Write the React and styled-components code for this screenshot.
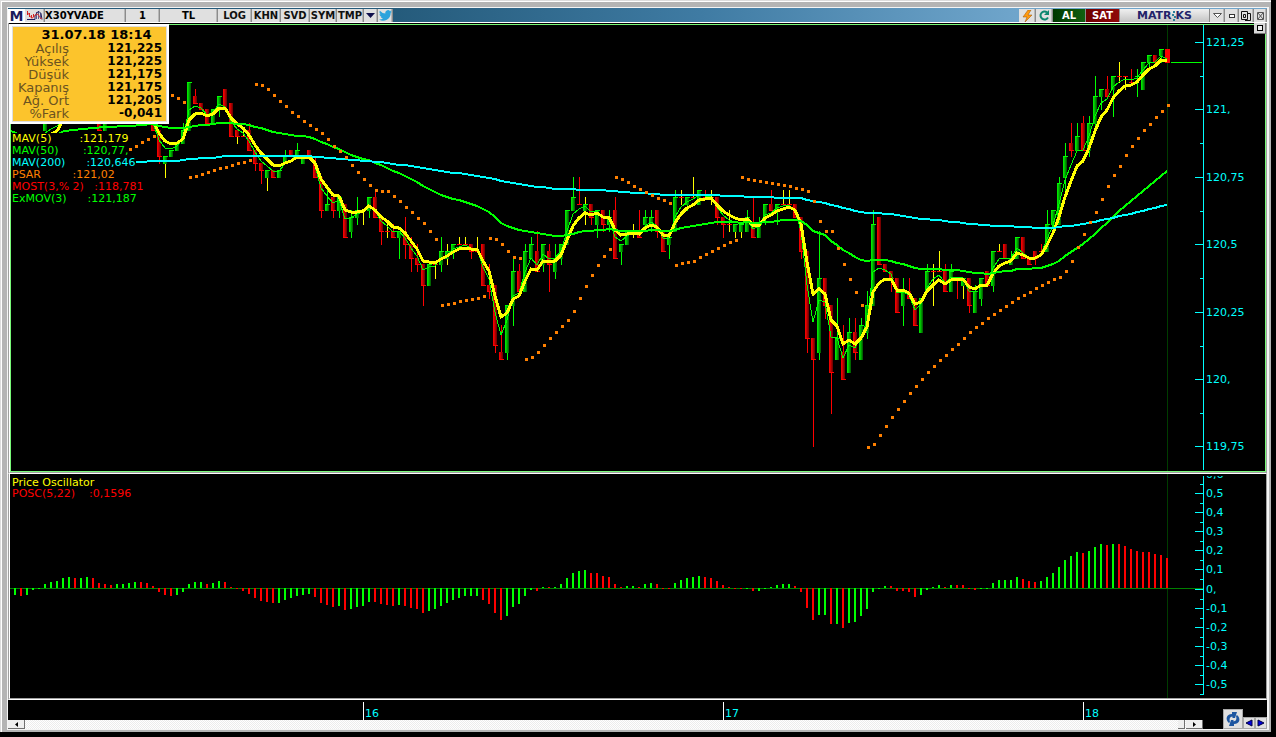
import React from "react";
import styled, { createGlobalStyle } from "styled-components";

// ------------------------ STYLES ------------------------

const GlobalStyle = createGlobalStyle`
  * {
    box-sizing: border-box;
  }

  body {
    margin: 0;
    background: #000;
    font-family: "DejaVu Sans", Verdana, sans-serif;
    font-size: 11px;
  }

  button,
  input {
    font: inherit;
    margin: 0;
    padding: 0;
    border: 0;
    border-radius: 0;
  }
`;

const Desktop = styled.div`
  height: 100vh;
  padding: 0 5px 5px 0;
`;

const Window = styled.main`
  height: 100%;
  padding: 7px 2px 2px 7px;
  background: #b4b4b4;
  box-shadow: inset 1px 1px #dcdcdc, inset 2px 2px #fff;
`;

const Frame = styled.div`
  height: 100%;
  display: flex;
  flex-direction: column;
  border: 1px solid #f4f4f4;
  border-right-width: 2px;
`;

const Toolbar = styled.header`
  height: 15px;
  flex: none;
  display: flex;
  padding-top: 1px;
  border-bottom: 1px solid #fff;
  background: linear-gradient(90deg, #245a7a 30%, #3f7ba3 55%, #6fa5cb 80%);
`;

const ToolField = styled.input`
  width: ${(p) => p.$width}px;
  background: #e0e0e0;
  border: solid #8c8c8c;
  border-width: 0 1px 0 0;
  box-shadow: inset -1px 0 #b8b8b8;
  color: #000;
  font-size: 10px;
  font-weight: 700;
  text-align: ${(p) => p.$align || "center"};
`;

const ToolButton = styled.button`
  width: ${(p) => p.$width}px;
  display: flex;
  align-items: center;
  justify-content: center;
  background: ${(p) => p.$bg || "#e0e0e0"};
  border: solid #8c8c8c;
  border-width: 0 1px 0 0;
  box-shadow: inset -1px 0 ${(p) => (p.$bg ? "transparent" : "#b8b8b8")};
  color: ${(p) => p.$color || "#101010"};
  font-size: 10px;
  font-weight: 700;
  line-height: 12px;
`;

const Spacer = styled.div`
  flex: 1;
`;

const AppMark = styled.div`
  width: 17px;
  background: #fff;
  color: #1c1c5e;
  font-size: 14px;
  font-weight: 700;
  line-height: 14px;
  text-align: center;
`;

const Brand = styled.div`
  width: 90px;
  display: flex;
  align-items: center;
  justify-content: center;
  background: linear-gradient(#f0f0f0, #c4c4c4);
  border-right: 1px solid #8c8c8c;
  color: #23236a;
  font-size: 11px;
  font-weight: 700;
  line-height: 12px;
`;

const PricePanel = styled.section`
  position: relative;
  flex: 451 1 0;
  min-height: 0;
  padding-top: 1px;
  background: #000;
  border: solid #a0a0a0;
  border-width: 0 1px;
  border-bottom: 1px solid #fff;
`;

const PanelEdge = styled.div`
  height: 100%;
  border-left: 1px solid #fff;
  border-bottom: 1px solid #a0a0a0;
`;

const OscPanel = styled(PricePanel)`
  flex-grow: 226;
  padding-top: 0;
`;

const Chart = styled.svg`
  display: block;
  width: 100%;
  height: 100%;
  border: ${(p) => (p.$framed ? "1px solid #78f878" : "0")};
  font-size: 11px;
`;

const MaxButton = styled.button`
  position: absolute;
  top: 0;
  right: 0;
  width: 12px;
  height: 11px;
  display: flex;
  align-items: center;
  justify-content: center;
  background: #d8d8d8;
  border-right: 1px solid #777;
  border-bottom: 1px solid #777;
`;

const QuoteBox = styled.section`
  position: absolute;
  top: 1px;
  left: 1px;
  width: 159px;
  height: 100px;
  padding: 2px 5px;
  background: #fcc42c;
  border: 2px solid #fff;
  box-shadow: inset 1px 1px #dedede, inset -1px -1px #dedede;
`;

const QuoteTime = styled.h2`
  margin: 0;
  padding-left: 14px;
  font-size: 13px;
  font-weight: 700;
  line-height: 14px;
  text-align: center;
`;

const QuoteTable = styled.table`
  width: 100%;
  border-collapse: collapse;
  line-height: 13px;

  th {
    width: 52px;
    padding: 0;
    color: #6b5320;
    font-size: 13px;
    font-weight: 400;
    text-align: right;
  }

  td {
    padding: 0;
    color: #000;
    font-size: 12px;
    font-weight: 700;
    text-align: right;
  }
`;

const Legend = styled.ul`
  position: absolute;
  top: ${(p) => p.$top}px;
  left: 3px;
  margin: 0;
  padding: 0;
  list-style: none;
`;

const LegendRow = styled.li`
  width: fit-content;
  height: ${(p) => p.$height || 12}px;
  background: #000;
  color: ${(p) => p.$color};
  line-height: 12px;
  white-space: pre;
`;

const Footer = styled.footer`
  height: 29px;
  flex: none;
  display: flex;
  background: #000;
`;

const Timeline = styled.div`
  flex: 1;
  display: flex;
  flex-direction: column;
`;

const TimeAxis = styled.svg`
  display: block;
  width: 100%;
  height: 20px;
  font-size: 11px;
`;

const Scrollbar = styled.div`
  height: 9px;
  display: flex;
  gap: 1px;
  background: repeating-conic-gradient(#fff 0 25%, #ececec 0 50%) 0 0 / 2px 2px;
`;

const ScrollButton = styled.button`
  width: ${(p) => p.$width}px;
  display: flex;
  align-items: center;
  justify-content: center;
  background: #efefef;
  border-right: 1px solid #707070;
  border-bottom: 1px solid #707070;
`;

const Corner = styled.div`
  width: 64px;
  display: flex;
  align-items: flex-end;
  justify-content: flex-end;
`;

const CornerButton = styled.button`
  width: ${(p) => p.$width}px;
  height: ${(p) => p.$height}px;
  display: flex;
  align-items: center;
  justify-content: center;
  background: #e0e0e0;
  border: 1px solid #a8a8a8;
`;

// ------------------------ DATA ------------------------

// levels count 0.025 steps down from 121,25: [kind, high, top, bottom, low]
// g = up, r = down, d = doji, a trailing y paints the wick yellow
const FIRST = 23;
const candles = `
r 12 12 13 13|r 13 13 17 18|gy 17 17 18 20|g 16 16 17 17|g 15 15 16 16|g 12 13 15 15|g 6 6 13 13
r 7 8 9 9|r 9 9 10 10|r 10 10 12 12|g 10 10 12 12|g 8 8 10 11|r 7 7 10 10|r 9 9 14 14
ry 13 13 14 15|d 13 14 14 14|r 12 13 16 16|r 16 16 18 19|r 18 18 19 21|gy 19 19 20 22|r 19 19 20 20
g 19 19 20 20|g 16 17 18 18|r 16 16 17 17|g 15 16 17 17|g 17 17 18 18|r 16 16 17 17|r 17 18 20 20
r 20 20 25 26|g 22 24 25 25|r 23 23 25 26|g 23 23 25 26|r 24 24 29 29|g 25 26 28 29|g 23 25 26 27
d 25 25 25 27|g 23 23 25 26|r 22 23 26 26|r 26 26 28 30|d 27 28 28 29|r 27 28 29 29|g 28 28 29 32
r 26 28 30 32|r 29 30 32 34|r 30 32 33 34|r 33 33 36 39|g 33 33 36 36|d 33 33 33 35|g 29 31 33 34
gy 30 31 32 33|g 30 30 31 32|d 29 30 30 30|d 29 30 30 30|r 30 30 31 32|d 29 31 31 31|r 30 30 36 36
r 33 36 37 38|r 36 36 45 46|r 42 46 47 47|g 39 39 46 47|g 32 34 39 42|r 33 34 37 37|g 30 31 37 37
g 29 30 32 32|r 28 31 34 34|g 30 30 33 34|r 30 31 33 37|g 30 32 34 35|g 30 30 32 33|g 25 25 30 30
g 20 23 25 25|r 20 24 24 24|gy 23 24 25 27|r 24 24 26 27|g 25 25 27 29|r 25 25 27 28|g 25 26 27 28
r 23 25 32 32|g 30 30 31 33|g 28 28 30 30|d 27 28 28 29|r 25 28 29 29|g 25 26 27 28|g 25 26 27 28
r 25 25 28 29|r 28 28 31 31|g 29 29 30 32|g 22 23 28 28|d 22 23 23 24|g 23 23 24 25|d 20 23 23 23
g 22 22 24 24|r 22 23 23 23|d 22 23 23 24|r 23 23 26 27|r 26 26 27 29|d 25 27 27 28|gy 27 27 28 29
gy 27 27 28 29|g 25 26 28 28|r 23 27 29 29|g 26 27 29 29|g 24 24 26 27|r 22 24 25 25|g 24 24 25 27
d 22 24 24 24|d 22 24 24 24|r 24 24 26 26|r 26 26 31 32|r 31 31 44 46|r 44 44 47 60|g 28 35 46 47
r 35 35 39 41|r 39 39 49 55|g 38 44 47 47|r 42 46 50 50|g 41 43 49 49|r 41 43 46 47|g 41 42 47 47
g 37 39 43 44|g 25 27 39 39|r 26 26 33 33|r 33 33 34 34|r 34 34 35 37|r 35 35 40 40|g 35 37 39 42
r 35 37 38 38|r 38 38 42 42|g 38 38 43 43|g 33 34 37 37|d 33 34 34 39|d 31 34 34 34|r 33 34 37 37
g 33 34 37 37|r 35 35 35 38|gy 35 35 36 38|r 35 35 39 40|g 36 37 40 40|g 35 35 38 39|r 34 34 36 36
g 31 31 36 37|d 30 31 31 31|r 30 30 32 32|g 31 32 33 33|g 29 29 32 32|r 29 29 32 32|r 32 32 33 33
r 31 31 32 33|r 30 31 31 31|g 25 27 31 31|g 25 25 27 28|g 20 21 27 27|g 15 17 20 22|r 12 15 16 17
g 12 14 16 16|r 11 12 16 16|g 11 12 16 17|g 5 8 12 13|g 7 7 8 10|r 5 7 8 8|g 5 5 7 11
d 3 5 5 6|d 5 5 5 7|r 4 6 6 6|g 4 5 5 8|g 3 3 7 7|g 2 2 3 4|r 2 2 3 3|g 1 1 2 3|r 1 1 3 3`
  .trim()
  .split(/[|\n]/)
  .map((row, k) => {
    const [kind, high, top, bottom, low] = row.split(" ");
    return { i: FIRST + k, kind, high: +high, top: +top, bottom: +bottom, low: +low };
  });

const earlyCandles = [
  { i: 5, kind: "g", high: 10, top: 10, bottom: 13, low: 13 },
  { i: 14, kind: "r", high: 10, top: 10, bottom: 13, low: 13 },
  { i: 15, kind: "g", high: 10, top: 10, bottom: 13, low: 13 },
];

// parabolic stops: first bar, then one row per bar
const psar = [
  [18, 153, 149, 146, 142, 139, 136],
  [26, 95, 98, 102],
  [29, 177, 176, 174, 172, 170, 168, 167, 165, 163, 162, 160],
  [40, 84, 85, 89, 95, 101, 106, 112, 116, 121, 125, 129, 133, 139, 146, 151, 157, 165, 172, 179, 185, 190, 191, 191, 196, 201, 207, 212, 218, 223, 231, 239],
  [71, 305, 304, 303, 301, 300, 299, 298, 296],
  [79, 238, 239, 244, 251, 257, 258],
  [85, 359, 357, 352, 345, 338, 332, 326, 320, 311, 298, 286, 275, 265, 256, 249],
  [100, 177, 179, 182, 186, 189, 192, 195, 198, 200, 203],
  [110, 265, 263, 262, 261, 257, 254, 251, 248, 245, 242, 240],
  [121, 177, 179, 180, 181, 182, 183, 184, 185, 186, 188, 189, 191, 201, 221, 231, 231, 248, 264, 279, 292, 305],
  [142, 447, 444, 435, 426, 417, 409, 401, 393, 386, 379, 372, 366, 360, 355, 349, 344, 338, 332, 327, 323, 318, 314, 310, 306, 302, 298, 295, 292, 288, 285, 282, 279, 277, 271, 261, 247, 234, 222, 212, 199, 186, 175, 166, 155, 146, 138, 130, 124, 117, 111, 105],
];

const earlyOsc = [
  -0.035, -0.04, -0.035, -0.01, -0.005, 0.025, 0.035, 0.04, 0.055, 0.06, 0.055, 0.056,
  0.06, 0.055, 0.03, 0.025, 0.02, 0.025, 0.026, 0.03, 0.035, 0.034, 0.03,
];

const legend = [
  { color: "#ffff00", text: "MAV(5)        :121,179" },
  { color: "#00ff00", text: "MAV(50)       :120,77," },
  { color: "#00ffff", text: "MAV(200)      :120,646" },
  { color: "#ff8000", text: "PSAR         :121,02" },
  { color: "#ff0000", text: "MOST(3,% 2)   :118,781" },
  { color: "#00ff00", text: "ExMOV(3)      :121,187" },
];

const quote = [
  ["Açılış", "121,225"],
  ["Yüksek", "121,225"],
  ["Düşük", "121,175"],
  ["Kapanış", "121,175"],
  ["Ağ. Ort", "121,205"],
  ["%Fark", "-0,041"],
];

const priceLabels = ["121,25", "121,", "120,75", "120,5", "120,25", "120,", "119,75"];
const oscLabels = ["0,6", "0,5", "0,4", "0,3", "0,2", "0,1", "0,", "-0,1", "-0,2", "-0,3", "-0,4", "-0,5"];
const days = [
  { i: 58, label: "16" },
  { i: 118, label: "17" },
  { i: 178, label: "18" },
];

// ------------------------ SCALES ------------------------

const barX = (i) => 15 + i * 6;
const levelY = (n) => 41.9 + n * 6.74;
const oscY = (v) => 588.5 - v * 191;

const closes = candles.map((c) => (c.kind[0] === "g" ? c.top : c.bottom));

const ema = (length, seed) => {
  const k = 2 / (length + 1);
  let value = seed;
  return closes.map((close) => {
    value += (close - value) * k;
    return value;
  });
};

const ema3 = ema(3, 11);
const ema5 = ema(5, 11);
const ema22 = ema(22, 12.1);
const ema50 = ema(50, 12.2);
const ema200 = ema(200, 17.7);

const toPoints = (series, start = FIRST) =>
  series.map((n, k) => `${barX(start + k)},${Math.round(levelY(n))}`).join(" ");

const osc = [
  ...earlyOsc,
  ...ema5.map((fast, k) => {
    const slow = 121.25 - ema22[k] * 0.025;
    return (((ema22[k] - fast) * 0.025) / slow) * 100;
  }),
];

// ------------------------ CHART PARTS ------------------------

const Candle = ({ i, kind, high, top, bottom, low }) => {
  const x = barX(i);
  const up = kind[0] === "g";
  const yellow = kind[0] === "d" || kind[1] === "y";
  const edge = up ? "#00ff00" : "#ff0000";
  const y1 = Math.round(levelY(top));
  const y2 = Math.round(levelY(bottom));
  const wickTop = Math.round(levelY(high));
  const wickBottom = Math.round(levelY(low));

  return (
    <g>
      <rect x={x} y={wickTop} width="1" height={wickBottom - wickTop + 1} fill={yellow ? "#ffff00" : edge} />
      {y2 > y1 && (
        <rect x={x - 2} y={y1} width="4" height={y2 - y1 + 1} fill={up ? "url(#up)" : "url(#down)"} />
      )}
      <rect x={x - 2} y={up ? y1 : y2} width="5" height="1" fill={edge} />
    </g>
  );
};

const PriceChart = () => (
  <Chart $framed viewBox="11 25 1254 446" preserveAspectRatio="xMaxYMin meet" shapeRendering="crispEdges">
    <defs>
      <linearGradient id="up">
        <stop offset="0.2" stopColor="#00e400" />
        <stop offset="1" stopColor="#005000" />
      </linearGradient>
      <linearGradient id="down">
        <stop offset="0.2" stopColor="#f00000" />
        <stop offset="1" stopColor="#600000" />
      </linearGradient>
    </defs>
    <rect x="1167" y="25" width="1" height="446" fill="#003c00" />
    {[...earlyCandles, ...candles].map((c) => (
      <Candle key={c.i} {...c} />
    ))}
    <rect x="1165" y="49" width="5" height="14" fill="#ff0000" />
    <g fill="none">
      <polyline points={toPoints(ema3)} stroke="#00ff00" />
      <polyline points={toPoints(ema5)} stroke="#ffff00" strokeWidth="3" />
      <polyline points="45,133 51,129 57,126 61,122" stroke="#00ff00" />
      <polyline points="51,134 57,131 61,124 64,118" stroke="#ffff00" strokeWidth="3" />
      <polyline
        points={`11,131 20,135 56,135 64,131 83,129 105,127 130,126 ${toPoints(ema50)}`}
        stroke="#00ff00"
        strokeWidth="2"
      />
      <polyline points={`130,163 ${toPoints(ema200)}`} stroke="#00ffff" strokeWidth="2" />
    </g>
    <g fill="#ff8000">
      {psar.map(([start, ...rows]) =>
        rows.map((y, k) => (
          <rect key={start + k} x={barX(start + k)} y={y - 1} width="3" height="3" />
        ))
      )}
    </g>
    <rect x="1171" y="62" width="31" height="1" fill="#00ff00" />
    <g fill="#00ffff">
      <rect x="1203" y="25" width="1" height="445" />
      {priceLabels.map((label, k) => {
        const y = Math.round(levelY(k * 10));
        return (
          <g key={label}>
            <rect x="1195" y={y} width="9" height="1" />
            {k < 6 && <rect x="1200" y={y + 34} width="4" height="1" />}
            <text x="1206" y={y + 4}>{label}</text>
          </g>
        );
      })}
    </g>
  </Chart>
);

const OscChart = () => (
  <Chart viewBox="10 474 1256 224" preserveAspectRatio="xMaxYMin meet" shapeRendering="crispEdges">
    <clipPath id="oscAxis">
      <rect x="1190" y="476" width="76" height="220" />
    </clipPath>
    <rect x="1167" y="474" width="1" height="224" fill="#003c00" />
    <rect x="10" y="588" width="1193" height="1" fill="#008000" />
    {osc.map((value, i) => {
      const y = Math.round(oscY(value));
      return (
        <rect
          key={i}
          x={barX(i) - 1}
          y={Math.min(y, 588)}
          width="2"
          height={Math.max(1, Math.abs(y - 588))}
          fill={value > (i ? osc[i - 1] : -1) ? "#00ff00" : "#ff0000"}
        />
      );
    })}
    <g fill="#00ffff" clipPath="url(#oscAxis)">
      <rect x="1203" y="476" width="1" height="219" />
      {oscLabels.map((label, k) => {
        const y = Math.round(oscY(0.6 - k * 0.1));
        return (
          <g key={label}>
            <rect x="1195" y={y} width="9" height="1" />
            <rect x="1200" y={y + 10} width="4" height="1" />
            <text x="1206" y={y + 4}>{label}</text>
          </g>
        );
      })}
    </g>
  </Chart>
);

// ------------------------ ICONS ------------------------

const WaveIcon = () => (
  <svg width="17" height="11" viewBox="0 0 17 11" fill="none">
    <path d="M1.500 1v4M3.500 3v4M5.500 5v3M7.500 4v3" stroke="#d02020" />
    <path d="M10.500 2v7M12.500 1v8M14.500 3v6" stroke="#5a5a8a" />
    <path d="M1 9.500h8V6l2-3.500 2-1 2 2 1 6" stroke="#202060" />
    <path d="M1 2c2 1 3 6 5 6s3-4 5-4 2 4 5 5" stroke="#e03030" />
  </svg>
);

const TwitterIcon = () => (
  <svg width="13" height="11" viewBox="0 0 24 20" fill="#2ca3dc">
    <path d="M24 2.400a10 10 0 0 1-2.800.8A5 5 0 0 0 23.300.500a10 10 0 0 1-3.100 1.200 4.900 4.900 0 0 0-8.400 4.500A14 14 0 0 1 1.700 1a4.900 4.900 0 0 0 1.500 6.600A5 5 0 0 1 1 7c0 2.300 1.600 4.400 3.900 4.900a5 5 0 0 1-2.200.1 4.900 4.900 0 0 0 4.600 3.400A9.900 9.900 0 0 1 0 17.400 14 14 0 0 0 21.500 5a10 10 0 0 0 2.500-2.600z" />
  </svg>
);

const BoltIcon = () => (
  <svg width="11" height="12" viewBox="0 0 11 12">
    <path d="M6 0 1 7h4l-2 5 7-7H6l3-5z" fill="#ff9a10" stroke="#9a5200" strokeWidth="0.500" />
  </svg>
);

const ReloadIcon = () => (
  <svg width="11" height="11" viewBox="0 0 11 11">
    <path d="M9 7.500A4 4 0 1 1 8 2.400" fill="none" stroke="#0d8870" strokeWidth="2" />
    <path d="M10 0v5H5z" fill="#0d8870" />
  </svg>
);

const SyncIcon = () => (
  <svg width="16" height="16" viewBox="0 0 16 16" fill="#1d56a0">
    <path d="M4 12C0 9 1 3 7 3V1l5 0-2 6H7l1-1C5 5 4 8 5 11z" />
    <path d="M12 4c4 3 3 9-3 9v2H4l2-6h3l-1 1c3 1 4-2 3-5z" />
  </svg>
);

const Triangle = ({ d, w = 7, h = 7, ...rest }) => (
  <svg width={w} height={h} viewBox={`0 0 ${w} ${h}`} {...rest}>
    <path d={d} />
  </svg>
);

// ------------------------ COMPONENT ------------------------

const App = () => (
  <Desktop>
    <GlobalStyle />
    <Window>
      <Frame>
        <Toolbar>
          <AppMark>M</AppMark>
          <ToolButton $width={20} aria-label="Chart type"><WaveIcon /></ToolButton>
          <ToolField $width={81} $align="left" aria-label="Symbol" defaultValue="X30YVADE" />
          <ToolField $width={34} aria-label="Period" defaultValue="1" />
          <ToolField $width={58} aria-label="Currency" defaultValue="TL" />
          <ToolButton $width={34}>LOG</ToolButton>
          <ToolButton $width={29}>KHN</ToolButton>
          <ToolButton $width={29}>SVD</ToolButton>
          <ToolButton $width={27}>SYM</ToolButton>
          <ToolButton $width={27}>TMP</ToolButton>
          <ToolButton $width={14} aria-label="More">
            <Triangle w={9} h={5} d="M0 0h9L4.500 5z" fill="#10104c" />
          </ToolButton>
          <ToolButton $width={15} aria-label="Twitter"><TwitterIcon /></ToolButton>
          <Spacer />
          <ToolButton $width={17} aria-label="Quick order"><BoltIcon /></ToolButton>
          <ToolButton $width={17} aria-label="Reload"><ReloadIcon /></ToolButton>
          <ToolButton $width={33} $bg="linear-gradient(90deg, #003800, #106010)" $color="#fff">AL</ToolButton>
          <ToolButton $width={34} $bg="linear-gradient(90deg, #6c0000, #900808)" $color="#fff">SAT</ToolButton>
          <Brand>
            MATR
            <svg width="4" height="10" viewBox="0 0 4 10">
              <path d="M1 0h2v2H1zM0 3h2v2H0zM2 5h2v2H2zM1 8h2v2H1z" fill="#2a7f9a" />
            </svg>
            KS
          </Brand>
          <ToolButton $width={15} aria-label="Menu">
            <Triangle w={9} h={5} d="M.5.5h8L4.500 4.500z" fill="#fff" stroke="#555" />
          </ToolButton>
          <ToolButton $width={14} aria-label="Minimize">
            <svg width="6" height="4"><rect x="0.500" y="0.500" width="5" height="3" fill="#fff" stroke="#333" /></svg>
          </ToolButton>
          <ToolButton $width={15} aria-label="Restore">
            <svg width="10" height="10" fill="none" stroke="#111">
              <path d="M.5.5h6v8h-6zM7 2.500h2.500v7H4M2.500 3.500h2v3h-2z" />
            </svg>
          </ToolButton>
          <ToolButton $width={13} aria-label="Close">
            <svg width="7" height="8" fill="none" stroke="#555">
              <path d="M.5.5h6v7h-6zM1 1l5 6M6 1 1 7" />
            </svg>
          </ToolButton>
        </Toolbar>

        <PricePanel>
          <PanelEdge>
            <PriceChart />
          </PanelEdge>
          <Legend $top={110}>
            {legend.map((row) => (
              <LegendRow key={row.text} $color={row.color}>{row.text}</LegendRow>
            ))}
          </Legend>
          <QuoteBox>
            <QuoteTime>31.07.18 18:14</QuoteTime>
            <QuoteTable>
              <tbody>
                {quote.map(([label, value]) => (
                  <tr key={label}>
                    <th scope="row">{label}</th>
                    <td>{value}</td>
                  </tr>
                ))}
              </tbody>
            </QuoteTable>
          </QuoteBox>
          <MaxButton aria-label="Maximize panel">
            <svg width="6" height="6"><rect x="0.500" y="0.500" width="5" height="5" fill="#eee" stroke="#000" /></svg>
          </MaxButton>
        </PricePanel>

        <OscPanel>
          <PanelEdge>
            <OscChart />
          </PanelEdge>
          <Legend $top={3}>
            <LegendRow $color="#ffff00" $height={11}>Price Oscillator</LegendRow>
            <LegendRow $color="#ff0000">{"POSC(5,22)    :0,1596"}</LegendRow>
          </Legend>
        </OscPanel>

        <Footer>
          <Timeline>
            <TimeAxis viewBox="8 700 1195 20" preserveAspectRatio="xMaxYMin meet" shapeRendering="crispEdges">
              {days.map((day) => (
                <g key={day.label}>
                  <rect x={barX(day.i)} y="702" width="1" height="18" fill="#fff" />
                  <text x={barX(day.i) + 2} y="717" fill="#00ffff">{day.label}</text>
                </g>
              ))}
            </TimeAxis>
            <Scrollbar>
              <ScrollButton $width={17} aria-label="Scroll left">
                <Triangle w={3} h={5} d="M3 0v5L0 2.500z" />
              </ScrollButton>
              <Spacer />
              <ScrollButton $width={7} aria-label="Scroll thumb" />
              <ScrollButton $width={17} aria-label="Scroll right">
                <Triangle w={3} h={5} d="M0 0v5l3-2.500z" />
              </ScrollButton>
            </Scrollbar>
          </Timeline>
          <Corner>
            <CornerButton $width={20} $height={20} aria-label="Refresh"><SyncIcon /></CornerButton>
            <CornerButton $width={12} $height={12} aria-label="Previous">
              <Triangle w={8} h={8} d="M7 1v6L1 4z" fill="#0000e0" stroke="#000040" />
            </CornerButton>
            <CornerButton $width={12} $height={12} aria-label="Next">
              <Triangle w={8} h={8} d="M1 1v6l6-3z" fill="#0000e0" stroke="#000040" />
            </CornerButton>
          </Corner>
        </Footer>
      </Frame>
    </Window>
  </Desktop>
);

export default App;
